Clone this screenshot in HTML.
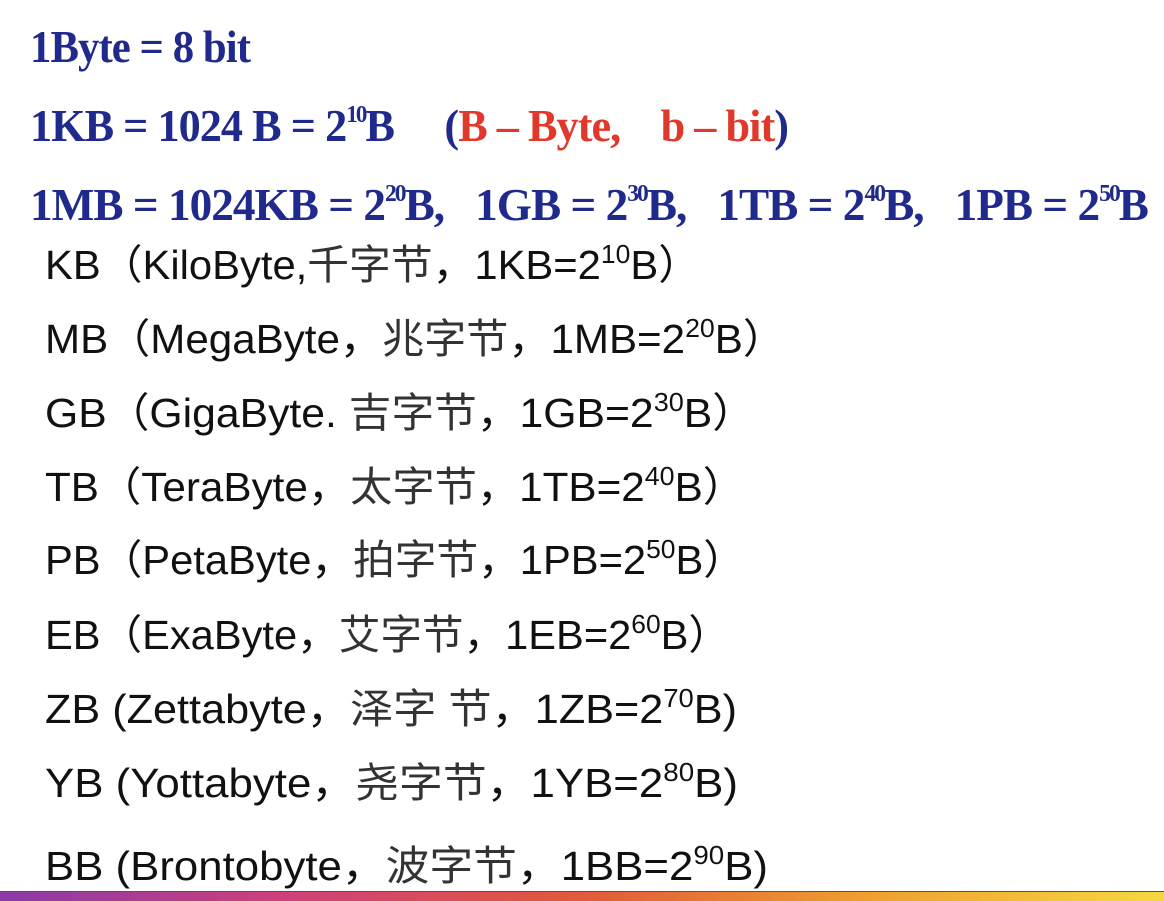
<!DOCTYPE html>
<html><head><meta charset="utf-8">
<style>
html,body{margin:0;padding:0;background:#fff;}
body{width:1164px;height:900px;position:relative;overflow:hidden;}
.l{position:absolute;left:0;white-space:nowrap;transform-origin:0 0;line-height:1;}
.s{font-family:"Liberation Serif",serif;font-weight:bold;font-size:46px;color:#1f2a8c;letter-spacing:-1px;}
.s sup{font-size:24px;vertical-align:0;position:relative;top:-19px;letter-spacing:-2px;}
.r{color:#e0382a;}
.n{font-family:"Liberation Sans","Noto Sans CJK SC",sans-serif;font-size:41px;color:#111;}
.n sup{font-size:26px;vertical-align:0;position:relative;top:-16px;}
.c{color:#333;}
#bar{position:absolute;left:0;top:891px;width:1164px;height:9px;background:linear-gradient(90deg,#8a3aa8,#d0407a 25%,#e05a3a 50%,#f0a030 75%,#f5d840);border-top:1px solid #555;}
</style></head><body>
<div class="l s" style="top:24px">1Byte = 8 bit</div>
<div class="l s" style="top:103px">1KB = 1024 B = 2<sup>10</sup>B&nbsp;&nbsp;&nbsp;&nbsp;&nbsp;(<span class="r">B – Byte,&nbsp;&nbsp;&nbsp;&nbsp;b – bit</span>)</div>
<div class="l s" style="top:182px">1MB = 1024KB = 2<sup>20</sup>B,&nbsp;&nbsp;&nbsp;1GB = 2<sup>30</sup>B,&nbsp;&nbsp;&nbsp;1TB = 2<sup>40</sup>B,&nbsp;&nbsp;&nbsp;1PB = 2<sup>50</sup>B</div>
<div class="l n" style="top:245px">KB（KiloByte,<span class="c">千字节</span>，1KB=2<sup>10</sup>B）</div>
<div class="l n" style="top:319px">MB（MegaByte，<span class="c">兆字节</span>，1MB=2<sup>20</sup>B）</div>
<div class="l n" style="top:393px">GB（GigaByte.&nbsp;<span class="c">吉字节</span>，1GB=2<sup>30</sup>B）</div>
<div class="l n" style="top:467px">TB（TeraByte，<span class="c">太字节</span>，1TB=2<sup>40</sup>B）</div>
<div class="l n" style="top:540px">PB（PetaByte，<span class="c">拍字节</span>，1PB=2<sup>50</sup>B）</div>
<div class="l n" style="top:615px">EB（ExaByte，<span class="c">艾字节</span>，1EB=2<sup>60</sup>B）</div>
<div class="l n" style="top:689px">ZB (Zettabyte，<span class="c">泽字 节</span>，1ZB=2<sup>70</sup>B)</div>
<div class="l n" style="top:763px">YB (Yottabyte，<span class="c">尧字节</span>，1YB=2<sup>80</sup>B)</div>
<div class="l n" style="top:846px">BB (Brontobyte，<span class="c">波字节</span>，1BB=2<sup>90</sup>B)</div>
<div id="bar"></div>
<script>
var spans=[[30,250],[30,788],[30,1148],[45,700],[45,785],[45,755],[45,745],[45,745],[45,730],[45,737],[45,738],[45,768]];
var ls=document.querySelectorAll('.l');
for(var i=0;i<ls.length;i++){var e=ls[i];var w=e.getBoundingClientRect().width;var t=spans[i][1]-spans[i][0];e.style.left=spans[i][0]+'px';e.style.transform='scaleX('+(t/w)+')';}
</script>
</body></html>
